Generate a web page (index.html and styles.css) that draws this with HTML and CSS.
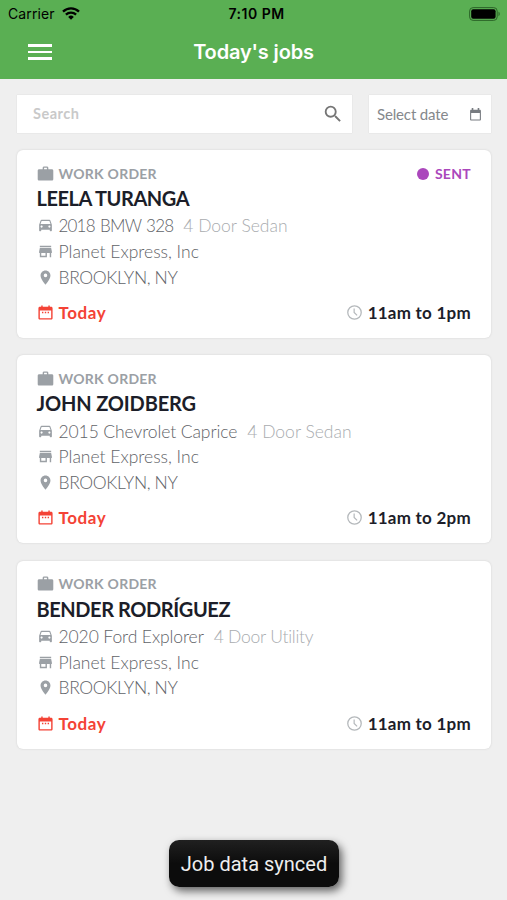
FILE: index.html
```html
<!DOCTYPE html>
<html lang="en">
<head>
	<meta charset="UTF-8">
	<title>Today's jobs</title>
	<link rel="stylesheet" href="styles.css">
</head>
<body>
	<!-- icons -->
	<svg class="sprite" width="0" height="0">
		<symbol id="work" viewBox="0 0 24 24"><path d="M21 6h-5V4c0-1.100-.9-2-2-2h-4c-1.100 0-2 .9-2 2v2H3c-1.100 0-2 .9-2 2v12c0 1.100.9 2 2 2h18c1.100 0 2-.9 2-2V8c0-1.100-.9-2-2-2zm-7 0h-4V4h4v2z"/></symbol>
		<symbol id="car" viewBox="0 0 24 24"><path d="M18.920 5.010C18.720 4.420 18.160 4 17.500 4h-11c-.66 0-1.210.42-1.420 1.010L3 11v8c0 .55.45 1 1 1h1c.55 0 1-.45 1-1v-1h12v1c0 .55.45 1 1 1h1c.55 0 1-.45 1-1v-8l-2.080-5.990zM6.500 15c-.83 0-1.500-.67-1.500-1.500S5.670 12 6.500 12s1.500.67 1.500 1.500S7.330 15 6.500 15zm11 0c-.83 0-1.500-.67-1.500-1.500s.67-1.500 1.500-1.500 1.500.67 1.500 1.500-.67 1.500-1.500 1.500zM5 10l1.500-4.500h11L19 10H5z"/></symbol>
		<symbol id="store" viewBox="0 0 24 24"><path d="M20 4H4v2h16V4zm1 10v-2l-1-5H4l-1 5v2h1v6h10v-6h4v6h2v-6h1zm-9 4H6v-4h6v4z"/></symbol>
		<symbol id="place" viewBox="0 0 24 24"><path d="M12 2C8.130 2 5 5.130 5 9c0 5.250 7 13 7 13s7-7.750 7-13c0-3.870-3.130-7-7-7zm0 9.500a2.500 2.500 0 0 1 0-5 2.500 2.500 0 0 1 0 5z"/></symbol>
		<symbol id="date" viewBox="0 0 24 24"><path d="M9 11H7v2h2v-2zm4 0h-2v2h2v-2zm4 0h-2v2h2v-2zm3-7h-2V2h-2v2H8V2H6v2H4c-1.100 0-2 .9-2 2v14c0 1.100.9 2 2 2h16c1.100 0 2-.9 2-2V6c0-1.100-.9-2-2-2zm0 16H4V9h16v11z"/></symbol>
		<symbol id="calendar" viewBox="0 0 24 24"><path d="M20 3h-1V0h-3v3H8V0H5v3H4c-1.100 0-2 .9-2 2v16c0 1.100.9 2 2 2h16c1.100 0 2-.9 2-2V5c0-1.100-.9-2-2-2zm0 18H4V9h16v12z"/></symbol>
		<symbol id="clock" viewBox="0 0 24 24"><circle cx="12" cy="12" r="9.500" fill="none" stroke="currentColor" stroke-width="1.800"/><path d="M11.500 6.500V12l4.200 4" fill="none" stroke="currentColor" stroke-width="1.700"/></symbol>
		<symbol id="search" viewBox="0 0 24 24"><path d="M15.500 14h-.79l-.28-.27A6.470 6.470 0 0 0 16 9.500 6.500 6.500 0 1 0 9.500 16c1.610 0 3.090-.59 4.230-1.570l.27.28v.79l5 4.990L20.490 19l-4.990-5zm-6 0C7.010 14 5 11.990 5 9.500S7.010 5 9.500 5 14 7.010 14 9.500 11.990 14 9.500 14z"/></symbol>
	</svg>

	<header class="header">
		<div class="statusBar">
			<span class="carrier">Carrier
				<svg class="wifi" viewBox="0 0 18 13" fill="none" stroke="#000" stroke-width="2.300"><path d="M1 4.700a11.500 11.500 0 0 1 16 0M3.900 7.700a7.400 7.400 0 0 1 10.200 0"/><path d="M9 12.700L6.200 9.900a4 4 0 0 1 5.600 0z" fill="#000" stroke="none"/></svg>
			</span>
			<span class="time">7:10 PM</span>
			<svg class="battery" viewBox="0 0 32 14"><rect x=".6" y=".6" width="27.600" height="12.800" rx="3.500" fill="none" stroke="#2c6428" stroke-width="1"/><rect x="2.200" y="2.200" width="24.400" height="9.600" rx="2"/><path d="M29.500 4.800c1.600.6 1.600 3.800 0 4.400z" fill="#2c6428"/></svg>
		</div>
		<div class="titleBar">
			<div class="menuBtn"><i></i><i></i><i></i></div>
			<h1>Today's jobs</h1>
		</div>
	</header>

	<div class="filterBar">
		<div class="field searchField"><span>Search</span><svg class="icon"><use href="#search"/></svg></div>
		<div class="field dateField"><span>Select date</span><svg class="icon"><use href="#calendar"/></svg></div>
	</div>

	<div class="jobList">
		<div class="job">
			<div class="row type"><svg class="icon"><use href="#work"/></svg><span>WORK ORDER</span><span class="status">SENT</span></div>
			<h2 class="leela">LEELA TURANGA</h2>
			<div class="row info"><svg class="icon"><use href="#car"/></svg><span class="bmw">2018 BMW 328</span><span class="body">4 Door Sedan</span></div>
			<div class="row info"><svg class="icon"><use href="#store"/></svg><span class="company">Planet Express, Inc</span></div>
			<div class="row info"><svg class="icon"><use href="#place"/></svg><span class="city">BROOKLYN, NY</span></div>
			<div class="row when"><svg class="icon"><use href="#date"/></svg><span class="day">Today</span><svg class="icon clock"><use href="#clock"/></svg><span class="hours">11am to 1pm</span></div>
		</div>
		<div class="job">
			<div class="row type"><svg class="icon"><use href="#work"/></svg><span>WORK ORDER</span></div>
			<h2 class="john">JOHN ZOIDBERG</h2>
			<div class="row info"><svg class="icon"><use href="#car"/></svg><span class="chevrolet">2015 Chevrolet Caprice</span><span class="body">4 Door Sedan</span></div>
			<div class="row info"><svg class="icon"><use href="#store"/></svg><span class="company">Planet Express, Inc</span></div>
			<div class="row info"><svg class="icon"><use href="#place"/></svg><span class="city">BROOKLYN, NY</span></div>
			<div class="row when"><svg class="icon"><use href="#date"/></svg><span class="day">Today</span><svg class="icon clock"><use href="#clock"/></svg><span class="hours">11am to 2pm</span></div>
		</div>
		<div class="job">
			<div class="row type"><svg class="icon"><use href="#work"/></svg><span>WORK ORDER</span></div>
			<h2 class="bender">BENDER RODRÍGUEZ</h2>
			<div class="row info"><svg class="icon"><use href="#car"/></svg><span class="ford">2020 Ford Explorer</span><span class="body utility">4 Door Utility</span></div>
			<div class="row info"><svg class="icon"><use href="#store"/></svg><span class="company">Planet Express, Inc</span></div>
			<div class="row info"><svg class="icon"><use href="#place"/></svg><span class="city">BROOKLYN, NY</span></div>
			<div class="row when"><svg class="icon"><use href="#date"/></svg><span class="day">Today</span><svg class="icon clock"><use href="#clock"/></svg><span class="hours">11am to 1pm</span></div>
		</div>
	</div>

	<div class="toast">Job data synced</div>
</body>
</html>
```
FILE: styles.css
```css
* {
  box-sizing: border-box;
}
body {
  margin: 0;
  height: 900px;
  overflow: hidden;
  position: relative;
  background: #efefef;
  font-family: Lato, "Open Sans", sans-serif;
}
.sprite {
  position: absolute;
}
.icon {
  width: 17px;
  height: 17px;
  fill: currentColor;
  flex: none;
}

/* header */
.header {
  height: 79px;
  background: #5aaf53;
  font-family: Inter, sans-serif;
}
.statusBar {
  height: 27px;
  padding: 0 6px 0 8px;
  display: grid;
  grid-template-columns: 1fr auto 1fr;
  align-items: center;
  font-size: 14px;
  color: #000;
}
.carrier {
  display: flex;
  align-items: center;
  gap: 7px;
  letter-spacing: .1px;
}
.wifi {
  width: 18px;
  height: 13px;
}
.time {
  padding-left: 4px;
  font-weight: 600;
  letter-spacing: .5px;
}
.battery {
  width: 32px;
  height: 14px;
  justify-self: end;
}
.titleBar {
  height: 50px;
  padding: 0 28px;
  display: grid;
  grid-template-columns: 24px 1fr 24px;
  align-items: center;
}
.menuBtn {
  display: flex;
  flex-direction: column;
  gap: 4px;
}
.menuBtn i {
  height: 2.500px;
  background: #fff;
}
.titleBar h1 {
  margin: 0;
  font-size: 20px;
  font-weight: 600;
  letter-spacing: -.15px;
  color: #fff;
  text-align: center;
}

/* filters */
.filterBar {
  padding: 16px 16px 0 17px;
  display: flex;
  gap: 17px;
}
.field {
  height: 38px;
  display: flex;
  align-items: center;
  justify-content: space-between;
  background: #fff;
  box-shadow: 0 0 1px #ccc;
}
.field span {
  padding-bottom: 1px;
}
.searchField {
  flex: 1;
  padding: 0 8px 0 16px;
  font-weight: bold;
  font-size: 14.500px;
  letter-spacing: .5px;
  color: #c9c9c9;
}
.searchField .icon {
  width: 22px;
  height: 22px;
  color: #757575;
}
.dateField {
  width: 122px;
  padding: 0 9px 0 8px;
  font-size: 15px;
  letter-spacing: -.15px;
  color: #85888c;
}
.dateField .icon {
  width: 13px;
  height: 13px;
  color: #777b80;
}

/* job cards */
.jobList {
  padding: 17px 16px 0 17px;
  display: flex;
  flex-direction: column;
  gap: 17.300px;
}
.job {
  height: 188px;
  padding: 14px 20px 0 19.500px;
  background: #fff;
  border-radius: 6px;
  box-shadow: 0 0 2px #ccc;
}
.row {
  display: flex;
  align-items: center;
  color: #9ba0a5;
}
.row .icon {
  margin-right: 5px;
}
.type {
  height: 18px;
  font-size: 14px;
  font-weight: bold;
  letter-spacing: .25px;
}
.status {
  margin-left: auto;
  letter-spacing: .3px;
  color: #ab47bc;
}
.status:before {
  content: "";
  display: inline-block;
  width: 12px;
  height: 12px;
  margin-right: 6px;
  border-radius: 50%;
  background: #ab47bc;
  vertical-align: -1px;
}
.job h2 {
  margin: 0;
  height: 31px;
  line-height: 33px;
  font-size: 20px;
  font-weight: bold;
  color: #1c1e29;
  white-space: nowrap;
}
.job .leela {
  letter-spacing: -.45px;
}
.job .john {
  letter-spacing: -.15px;
}
.job .bender {
  letter-spacing: -.42px;
}
.info {
  height: 25.700px;
  font-size: 17.500px;
  font-weight: 300;
}
.info span {
  color: #5f6368;
}
.info .bmw {
  font-size: 17px;
  letter-spacing: -.8px;
  word-spacing: 1.500px;
}
.info .chevrolet,
.info .ford {
  letter-spacing: -.1px;
}
.info .city {
  letter-spacing: -.38px;
}
.info .body {
  margin-left: 10px;
  color: #a9acaf;
}
.info .utility {
  letter-spacing: -.25px;
}
.when {
  height: 45px;
  font-size: 17px;
  font-weight: bold;
  color: #f44336;
}
.day {
  letter-spacing: .6px;
}
.when .clock {
  margin-left: auto;
  color: #b4b8bb;
}
.hours {
  letter-spacing: .25px;
  color: #1c1e29;
}

/* toast */
.toast {
  position: absolute;
  left: 169px;
  top: 840px;
  width: 170px;
  height: 47px;
  line-height: 48px;
  border-radius: 10px;
  background: linear-gradient(#202020, #0c0c0c 50%);
  box-shadow: 3px 4px 9px rgba(0, 0, 0, .6);
  font-family: Roboto, sans-serif;
  font-size: 20px;
  text-align: center;
  color: #eee;
}
```
